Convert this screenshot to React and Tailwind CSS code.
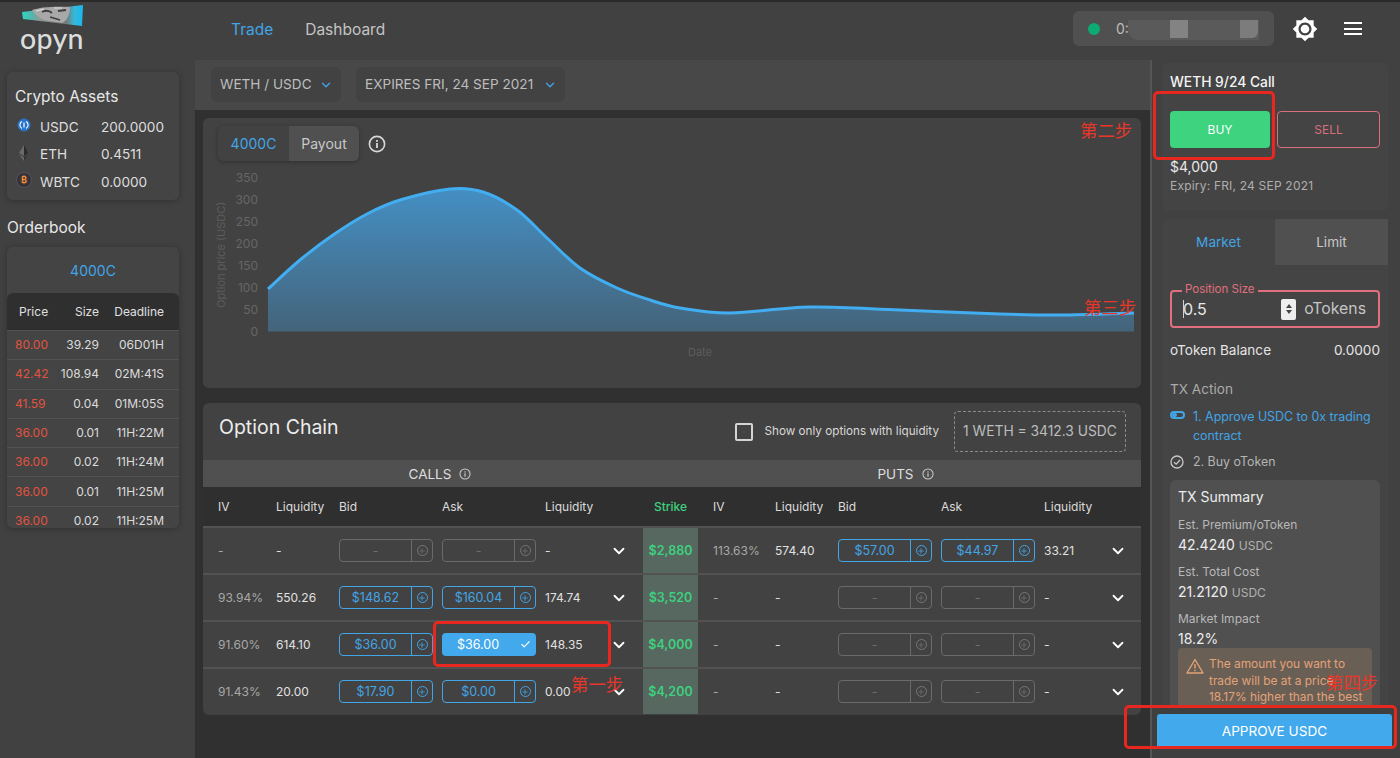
import { ChevronDown, Check, Plus } from 'lucide-react'

const FONT = "font-['Inter','Liberation_Sans',sans-serif]"

const ASSETS = [
  { name: 'USDC', value: '200.0000', icon: 'usdc' },
  { name: 'ETH', value: '0.4511', icon: 'eth' },
  { name: 'WBTC', value: '0.0000', icon: 'wbtc' },
]

const ORDERS = [
  ['80.00', '39.29', '06D01H'],
  ['42.42', '108.94', '02M:41S'],
  ['41.59', '0.04', '01M:05S'],
  ['36.00', '0.01', '11H:22M'],
  ['36.00', '0.02', '11H:24M'],
  ['36.00', '0.01', '11H:25M'],
  ['36.00', '0.02', '11H:25M'],
]

const CHAIN = [
  { strike: '$2,880', call: ['-', '-', null, null, '-'], put: ['113.63%', '574.40', '$57.00', '$44.97', '33.21'] },
  { strike: '$3,520', call: ['93.94%', '550.26', '$148.62', '$160.04', '174.74'], put: ['-', '-', null, null, '-'] },
  { strike: '$4,000', call: ['91.60%', '614.10', '$36.00', '$36.00', '148.35'], put: ['-', '-', null, null, '-'], selected: true },
  { strike: '$4,200', call: ['91.43%', '20.00', '$17.90', '$0.00', '0.00'], put: ['-', '-', null, null, '-'] },
]

const CURVE = [
  [268, 289], [300, 260], [333, 235], [367, 214], [400, 200], [450, 189], [483, 192], [517, 210], [547, 238],
  [580, 268], [617, 288], [650, 300], [680, 308], [730, 313], [810, 307], [900, 310], [1000, 314],
  [1060, 315], [1134, 313],
]

function smoothPath(pts) {
  let d = `M${pts[0][0]} ${pts[0][1]}`
  for (let i = 0; i < pts.length - 1; i++) {
    const p0 = pts[i - 1] || pts[i]
    const p1 = pts[i]
    const p2 = pts[i + 1]
    const p3 = pts[i + 2] || p2
    const c1x = p1[0] + (p2[0] - p0[0]) / 6
    const c1y = p1[1] + (p2[1] - p0[1]) / 6
    const c2x = p2[0] - (p3[0] - p1[0]) / 6
    const c2y = p2[1] - (p3[1] - p1[1]) / 6
    d += ` C${c1x} ${c1y} ${c2x} ${c2y} ${p2[0]} ${p2[1]}`
  }
  return d
}

function Logo() {
  return (
    <div className="w-[231px] shrink-0 pl-[20px] pt-[1px]">
      <svg width="66" height="24" viewBox="0 0 66 24" className="block">
        <defs>
          <linearGradient id="logoBand" x1="0" x2="1" y1="0" y2="0">
            <stop offset="0" stopColor="#2fd6c0" />
            <stop offset="0.16" stopColor="#4fb8ae" />
            <stop offset="0.28" stopColor="#8f9a9a" />
            <stop offset="0.72" stopColor="#777" />
            <stop offset="0.86" stopColor="#35b9d8" />
            <stop offset="1" stopColor="#18b8f0" />
          </linearGradient>
        </defs>
        <path d="M2 9 L63 2 L62 23 L3 16 Z" fill="url(#logoBand)" />
        <path d="M12 7 C20 4 34 3 50 4 C50 11 47 18 42 20 L24 17 C18 14 15 11 12 7 Z" fill="#a8a8a8" />
        <path d="M22 9 C26 7 30 8 32 10 M38 8 L46 7 M30 14 L40 17" stroke="#3f3f3f" strokeWidth="1.8" fill="none" />
        <path d="M16 8 L24 6 M34 5 L42 5" stroke="#dddddd" strokeWidth="1.2" fill="none" />
      </svg>
      <div className="font-['Lato',sans-serif] text-[28.5px] font-medium leading-[24px] text-[#dcdcdc] -mt-[1px] tracking-[0.3px]">opyn</div>
    </div>
  )
}

function Header() {
  return (
    <header className="h-[58px] flex items-start">
      <Logo />
      <nav className="flex gap-[32px] pt-[18px] text-[15.5px] leading-[20px]">
        <span className="text-[#42a5e6]">Trade</span>
        <span className="text-[#c4c4c4]">Dashboard</span>
      </nav>
      <div className="ml-auto flex items-center pt-[9px]">
        <div className="relative w-[201px] h-[35px] rounded-md bg-[#505050] flex items-center pl-[15px] overflow-hidden">
          <span className="w-[12px] h-[12px] rounded-full bg-[#0bab73]" />
          <span className="ml-[16px] text-[14px] text-[#bdbdbd]">0:</span>
          <div className="absolute left-[55px] top-[9px] w-[131px] h-[20px] rounded-bl-[10px] bg-[#5a5a5a] flex">
            <div className="ml-[42px] w-[18px] h-[18px] bg-[#838383]" />
            <div className="ml-[52px] w-[18px] h-[18px] bg-[#7c7c7c] rounded-br-md" />
          </div>
        </div>
        <svg width="26" height="26" viewBox="0 0 24 24" fill="#ffffff" className="ml-[18px]">
          <path d="M20 8.69V4h-4.69L12 .69 8.69 4H4v4.69L.69 12 4 15.31V20h4.69L12 23.31 15.31 20H20v-4.69L23.31 12 20 8.69zM12 18c-3.31 0-6-2.69-6-6s2.69-6 6-6 6 2.69 6 6-2.69 6-6 6zm0-10c-2.21 0-4 1.79-4 4s1.79 4 4 4 4-1.79 4-4-1.79-4-4-4z" />
        </svg>
        <div className="ml-[26px] mr-[38px] w-[18px] flex flex-col gap-[3.5px]">
          <span className="h-[2px] bg-white" />
          <span className="h-[2px] bg-white" />
          <span className="h-[2px] bg-white" />
        </div>
      </div>
    </header>
  )
}

function CoinIcon({ type }) {
  if (type === 'usdc') {
    return (
      <svg width="14" height="14" viewBox="0 0 14 14">
        <circle cx="7" cy="7" r="6.5" fill="#2775ca" />
        <path d="M5 3.6 A3.8 3.8 0 0 0 5 10.4 M9 3.6 A3.8 3.8 0 0 1 9 10.4" stroke="#fff" strokeWidth="1.1" fill="none" />
        <path d="M7 4.5 V9.5" stroke="#fff" strokeWidth="1.2" />
      </svg>
    )
  }
  if (type === 'eth') {
    return (
      <svg width="14" height="18" viewBox="0 0 14 18">
        <path d="M7 1 L2 9 L7 12 Z" fill="#6a6a6a" />
        <path d="M7 1 L11 9 L7 12 Z" fill="#2a2a2a" />
        <path d="M2 10.5 L7 17 L7 13.5 Z" fill="#6a6a6a" />
        <path d="M11 10.5 L7 17 L7 13.5 Z" fill="#333" />
      </svg>
    )
  }
  return (
    <svg width="16" height="16" viewBox="0 0 16 16">
      <circle cx="8" cy="8" r="7.5" fill="#33323a" stroke="#55535c" strokeWidth="1" />
      <circle cx="8" cy="8" r="4.6" fill="#4a3a30" />
      <text x="8" y="11" textAnchor="middle" fontSize="8.5" fontWeight="700" fill="#f09242">₿</text>
    </svg>
  )
}

function Sidebar() {
  return (
    <aside className="w-[195px] shrink-0 pl-[7px] pt-[12px]">
      <div className="w-[172px] h-[128px] rounded-md bg-[#444444] shadow-[0_1px_6px_rgba(0,0,0,0.25)] pl-[8px] pt-[15px]">
        <div className="text-[15.5px] leading-[20px] text-[#e8e8e8]">Crypto Assets</div>
        <div className="mt-[10px] flex flex-col gap-[8px]">
          {ASSETS.map(a => (
            <div key={a.name} className="flex items-center h-[19.5px] text-[13.6px] text-[#dedede]">
              <span className="w-[17px] flex justify-center -mt-[3px]"><CoinIcon type={a.icon} /></span>
              <span className="ml-[8px] w-[61px]">{a.name}</span>
              <span>{a.value}</span>
            </div>
          ))}
        </div>
      </div>
      <div className="mt-[18px] text-[15.5px] leading-[20px] text-[#e8e8e8]">Orderbook</div>
      <div className="mt-[9px] w-[172px] h-[281px] rounded-md bg-[#444444] shadow-[0_1px_6px_rgba(0,0,0,0.25)] overflow-hidden">
        <div className="h-[46px] flex items-center justify-center text-[14px] text-[#42a5e6]">4000C</div>
        <div className="h-[37px] bg-[#2f2f2f] rounded-t-md flex items-center text-[12px] text-[#e0e0e0]">
          <span className="w-[45px] pl-[12px] box-content">Price</span>
          <span className="w-[35px] text-right">Size</span>
          <span className="w-[65px] text-right">Deadline</span>
        </div>
        {ORDERS.map((o, i) => (
          <div key={i} className="h-[29.3px] border-t border-[#525252] flex items-center text-[12px] text-[#dcdcdc]">
            <span className="w-[45px] pl-[8px] box-content text-[#e2533f]">{o[0]}</span>
            <span className="w-[39px] text-right">{o[1]}</span>
            <span className="w-[65px] text-right">{o[2]}</span>
          </div>
        ))}
      </div>
    </aside>
  )
}

function Dropdown({ label, width }) {
  return (
    <div className={`h-[35px] rounded-md bg-[#424242] flex items-center justify-between pl-[9px] pr-[8px] text-[13.6px] text-[#bdbdbd] ${width}`}>
      <span>{label}</span>
      <ChevronDown size={14} strokeWidth={2.2} className="text-[#42a5e6]" />
    </div>
  )
}

function InfoIcon({ size = 18, className = '' }) {
  return (
    <svg width={size} height={size} viewBox="0 0 18 18" fill="none" className={className}>
      <circle cx="9" cy="9" r="7.6" stroke="currentColor" strokeWidth="1.6" />
      <rect x="8.1" y="8" width="1.8" height="5" fill="currentColor" />
      <rect x="8.1" y="5" width="1.8" height="1.8" fill="currentColor" />
    </svg>
  )
}

function Chart() {
  const line = smoothPath(CURVE)
  const ticks = [350, 300, 250, 200, 150, 100, 50, 0]
  return (
    <div className="h-[270px] rounded-md bg-[#424242] overflow-hidden">
      <div className="flex items-center pt-[8px] pl-[15px]">
        <div className="flex h-[35px] rounded-md overflow-hidden shadow-[0_1px_4px_rgba(0,0,0,0.3)] text-[14px]">
          <div className="w-[71px] flex items-center justify-center bg-[#424242] text-[#42a5e6]">4000C</div>
          <div className="w-[70px] flex items-center justify-center bg-[#505050] text-[#c8c8c8]">Payout</div>
        </div>
        <InfoIcon className="ml-[9px] text-[#d8d8d8]" />
      </div>
      <svg width="938" height="227" viewBox="203 161 938 227" className="block">
        <defs>
          <linearGradient id="area" x1="0" x2="0" y1="0" y2="1">
            <stop offset="0" stopColor="#448fc4" />
            <stop offset="1" stopColor="#44647a" />
          </linearGradient>
        </defs>
        {ticks.map((t, i) => (
          <text key={t} x="258" y={181.5 + i * 22} textAnchor="end" fontSize="12" fill="#666666">{t}</text>
        ))}
        <text x="0" y="0" transform="translate(225 308) rotate(-90)" fontSize="11" fill="#5c5c5c">Option price (USDC)</text>
        <text x="700" y="356" textAnchor="middle" fontSize="11" fill="#5c5c5c">Date</text>
        <path d={`${line} L1134 331.5 L268 331.5 Z`} fill="url(#area)" />
        <path d={line} fill="none" stroke="#42adf0" strokeWidth="3" />
      </svg>
    </div>
  )
}

function PriceButton({ value, selected }) {
  if (selected) {
    return (
      <div className="relative w-[94px] h-[23px] rounded-[4px] bg-[#42a9ec] flex items-center pt-[1px] text-[12.5px] text-white">
        <span className="w-[72px] text-center">{value}</span>
        <Check size={11} strokeWidth={2.4} className="absolute right-[5px] top-[6px]" />
      </div>
    )
  }
  const active = value !== null
  return (
    <div className={`w-[94px] h-[23px] rounded-[4px] border flex text-[12.5px] ${active ? 'border-[#42a5e6] text-[#42a5e6]' : 'border-[#6a6a6a] text-[#6e6e6e]'}`}>
      <span className={`w-[72px] flex items-center justify-center pt-[1px] border-r ${active ? 'border-[#42a5e6]' : 'border-[#6a6a6a]'}`}>
        {active ? value : '-'}
      </span>
      <span className="flex-1 flex items-center justify-center">
        <span className={`w-[11px] h-[11px] rounded-full border flex items-center justify-center ${active ? 'border-[#42a5e6]' : 'border-[#767676]'}`}>
          <Plus size={8} strokeWidth={2.4} />
        </span>
      </span>
    </div>
  )
}

function Side({ data, ivWidth, selected }) {
  return (
    <div className="flex-1 flex items-center pl-[15px] text-[12px]">
      <span className={`${ivWidth} text-[#a8a8a8]`}>{data[0]}</span>
      <span className="w-[63px] text-[#e0e0e0]">{data[1]}</span>
      <span className="w-[103px]"><PriceButton value={data[2]} /></span>
      <span className="w-[103px]"><PriceButton value={data[3]} selected={selected} /></span>
      <span className="w-[65px] text-[#e0e0e0]">{data[4]}</span>
      <ChevronDown size={18} strokeWidth={2.4} className="text-white" />
    </div>
  )
}

function HeadSide({ ivWidth }) {
  return (
    <div className="flex-1 flex items-center pl-[15px]">
      <span className={ivWidth}>IV</span>
      <span className="w-[63px]">Liquidity</span>
      <span className="w-[103px]">Bid</span>
      <span className="w-[103px]">Ask</span>
      <span>Liquidity</span>
    </div>
  )
}

function OptionChain() {
  return (
    <div className="mt-[15px] h-[312px] rounded-md bg-[#424242] overflow-hidden">
      <div className="h-[57px] flex items-center pl-[16px] pr-[15px]">
        <span className="text-[19.5px] text-[#ececec] -mt-[8px]">Option Chain</span>
        <div className="ml-auto flex items-center">
          <span className="w-[18px] h-[18px] rounded-[2px] border-2 border-[#d4d4d4]" />
          <span className="ml-[12px] pt-[1px] text-[11.7px] text-[#d8d8d8]">Show only options with liquidity</span>
          <span className="ml-[15px] w-[172px] h-[41px] rounded-[4px] border border-dashed border-[#8a8a8a] flex items-center justify-center text-[13.8px] text-[#bdbdbd]">1 WETH = 3412.3 USDC</span>
        </div>
      </div>
      <div className="h-[27px] pt-[1px] bg-[#505050] flex items-center text-[13.5px] text-[#dedede]">
        <div className="w-[440px] flex items-center justify-center gap-[8px] pl-[34px]">CALLS <InfoIcon size={12} className="text-[#c8c8c8]" /></div>
        <div className="w-[55px]" />
        <div className="flex-1 flex items-center justify-center gap-[8px] pr-[28px]">PUTS <InfoIcon size={12} className="text-[#c8c8c8]" /></div>
      </div>
      <div className="h-[39px] bg-[#2f2f2f] flex text-[12px] text-[#dcdcdc]">
        <div className="w-[440px] flex"><HeadSide ivWidth="w-[58px]" /></div>
        <div className="w-[55px] flex items-center justify-center font-medium text-[#3ed07f]">Strike</div>
        <div className="flex-1 flex"><HeadSide ivWidth="w-[62px]" /></div>
      </div>
      {CHAIN.map(row => (
        <div key={row.strike} className="h-[47px] flex border-t-2 border-[#525252]">
          <div className="w-[440px] flex"><Side data={row.call} ivWidth="w-[58px]" selected={row.selected} /></div>
          <div className="w-[55px] flex items-center justify-center pt-[1px] bg-[#56685f] text-[12.5px] font-semibold text-[#3ed07f]">{row.strike}</div>
          <div className="flex-1 flex"><Side data={row.put} ivWidth="w-[62px]" /></div>
        </div>
      ))}
    </div>
  )
}

function Main() {
  return (
    <main className="flex-1 min-w-0 bg-[#303030] flex flex-col">
      <div className="h-[50px] bg-[#484848] flex gap-[15px] pl-[16px] pt-[7px]">
        <Dropdown label="WETH / USDC" width="w-[130px]" />
        <Dropdown label="EXPIRES FRI, 24 SEP 2021" width="w-[209px]" />
      </div>
      <div className="pt-[8px] pl-[8px] pr-[9px]">
        <Chart />
        <OptionChain />
      </div>
    </main>
  )
}

function Stat({ label, value, unit }) {
  return (
    <div className="mb-[9px]">
      <div className="text-[12px] leading-[16px] text-[#b8b8b8]">{label}</div>
      <div className="mt-[3px] text-[14px] leading-[18px] text-[#ececec]">
        {value} {unit && <span className="text-[12px] text-[#b0b0b0]">{unit}</span>}
      </div>
    </div>
  )
}

function TradePanel() {
  return (
    <aside className="relative w-[250px] shrink-0 border-l-2 border-[#555555] pl-[10px] pr-[12px] pt-[3px] overflow-hidden">
      <div className="h-[148px] rounded-md bg-[#444444] pl-[8px] pr-[8px] pt-[11px]">
        <div className="text-[13.8px] leading-[16px] font-medium text-[#f4f4f4]">WETH 9/24 Call</div>
        <div className="mt-[21px] flex gap-[7px]">
          <div className="w-[100px] h-[37px] rounded-[4px] bg-[#3dd37f] flex items-center justify-center text-[12px] text-white">BUY</div>
          <div className="w-[103px] h-[37px] rounded-[4px] border border-[#d9707e] flex items-center justify-center text-[12px] text-[#d9707e]">SELL</div>
        </div>
        <div className="mt-[10px] text-[14px] leading-[18px] text-[#e8e8e8]">$4,000</div>
        <div className="mt-[2px] text-[12px] leading-[16px] text-[#aeaeae] tracking-[0.2px]">Expiry: FRI, 24 SEP 2021</div>
      </div>
      <div className="mt-[8px] rounded-t-md bg-[#444444] h-[500px]">
        <div className="flex h-[46px] text-[13.6px]">
          <div className="w-[113px] flex items-center justify-center text-[#42a5e6]">Market</div>
          <div className="flex-1 flex items-center justify-center bg-[#505050] text-[#c8c8c8]">Limit</div>
        </div>
        <div className="px-[8px]">
          <div className="relative mt-[25px] h-[38px] rounded-[4px] border-2 border-[#e0707f] flex items-center pl-[11px] pr-[12px]">
            <span className="absolute -top-[10px] left-[10px] px-[3px] bg-[#444444] text-[11.5px] leading-[14px] text-[#e0707f]">Position Size</span>
            <span className="w-[1px] h-[18px] bg-[#d0d0d0]" />
            <span className="-ml-[1px] text-[16px] text-[#e8e8e8]">0.5</span>
            <span className="ml-auto w-[15px] h-[21px] rounded-[2px] bg-[#eeeeee] flex flex-col items-center justify-center gap-[2px]">
              <span className="w-0 h-0 border-x-[3.5px] border-x-transparent border-b-[4px] border-b-[#444444]" />
              <span className="w-0 h-0 border-x-[3.5px] border-x-transparent border-t-[4px] border-t-[#444444]" />
            </span>
            <span className="ml-[8px] text-[15.8px] text-[#c4c4c4]">oTokens</span>
          </div>
          <div className="mt-[13px] flex justify-between text-[13.6px] leading-[18px] text-[#e4e4e4]">
            <span>oToken Balance</span>
            <span>0.0000</span>
          </div>
          <div className="mt-[21px] text-[13.6px] leading-[18px] text-[#aaaaaa]">TX Action</div>
          <div className="mt-[9px] flex text-[12.4px] leading-[19px] text-[#42a5e6]">
            <span className="w-[23px] shrink-0 pt-[4px]">
              <span className="block w-[15px] h-[8px] rounded-full border-2 border-[#42a5e6] relative">
                <span className="absolute left-0 top-0 w-[5px] h-[4px] rounded-full bg-[#42a5e6]" />
              </span>
            </span>
            <span>1. Approve USDC to 0x trading contract</span>
          </div>
          <div className="mt-[8px] flex items-center text-[12.4px] leading-[18px] text-[#b4b4b4]">
            <svg width="14" height="14" viewBox="0 0 14 14" fill="none" className="mr-[9px] text-[#c8c8c8]">
              <circle cx="7" cy="7" r="6" stroke="currentColor" strokeWidth="1.3" />
              <path d="M4 7.2 L6.2 9.2 L10 5" stroke="currentColor" strokeWidth="1.3" />
            </svg>
            2. Buy oToken
          </div>
          <div className="mt-[9px] rounded-t-md bg-[#505050] h-[230px] px-[8px] pt-[8px]">
            <div className="text-[14px] leading-[18px] text-[#ececec] mb-[11px]">TX Summary</div>
            <Stat label="Est. Premium/oToken" value="42.4240" unit="USDC" />
            <Stat label="Est. Total Cost" value="21.2120" unit="USDC" />
            <div className="text-[12px] leading-[16px] text-[#b8b8b8]">Market Impact</div>
            <div className="mt-[3px] text-[14px] leading-[18px] text-[#ececec]">18.2%</div>
            <div className="rounded-t-[4px] bg-[#6a5f55] h-[70px] pl-[31px] pr-[8px] pt-[8px] relative text-[11.9px] leading-[16.7px] text-[#e2a277]">
              <svg width="18" height="16" viewBox="0 0 18 16" fill="none" className="absolute left-[8px] top-[10px]">
                <path d="M9 1.5 L17 15 H1 Z" stroke="currentColor" strokeWidth="1.4" strokeLinejoin="round" />
                <path d="M9 6 V10.5 M9 11.8 V13.2" stroke="currentColor" strokeWidth="1.4" />
              </svg>
              The amount you want to trade will be at a price 18.17% higher than the best
            </div>
          </div>
        </div>
      </div>
      <div className="absolute left-0 right-0 top-[646px] h-[52px] bg-[#3f3f3f] pt-[8px] pl-[5px]">
        <div className="w-[235px] h-[35px] rounded-t-[3px] rounded-b-[2px] bg-[#42a9ec] flex items-center justify-center text-[13.6px] text-white">APPROVE USDC</div>
      </div>
    </aside>
  )
}

function Annotations() {
  const label = "absolute font-['Noto_Sans_CJK_SC',sans-serif] text-[17.4px] leading-[20px] text-[#e8372a]"
  const box = 'absolute border-[3px] border-[#e8281e] rounded-[5px]'
  return (
    <>
      <div className={`${box} left-[1153px] top-[91px] w-[122px] h-[69px]`} />
      <div className={`${box} left-[433px] top-[621px] w-[178px] h-[46px]`} />
      <div className={`${box} left-[1124px] top-[705px] w-[273px] h-[44px]`} />
      <span className={`${label} left-[1080px] top-[120px]`}>第二步</span>
      <span className={`${label} left-[1084px] top-[297px]`}>第三步</span>
      <span className={`${label} left-[571px] top-[674px]`}>第一步</span>
      <span className={`${label} left-[1326px] top-[672px]`}>第四步</span>
    </>
  )
}

export default function App() {
  return (
    <div className={`relative h-[758px] w-[1400px] overflow-hidden bg-[#414141] border-t-2 border-[#2a2a2a] ${FONT}`}>
      <Header />
      <div className="flex h-[698px]">
        <Sidebar />
        <Main />
        <TradePanel />
      </div>
      <div className="absolute left-0 -top-[2px] w-full h-full pointer-events-none">
        <Annotations />
      </div>
    </div>
  )
}
